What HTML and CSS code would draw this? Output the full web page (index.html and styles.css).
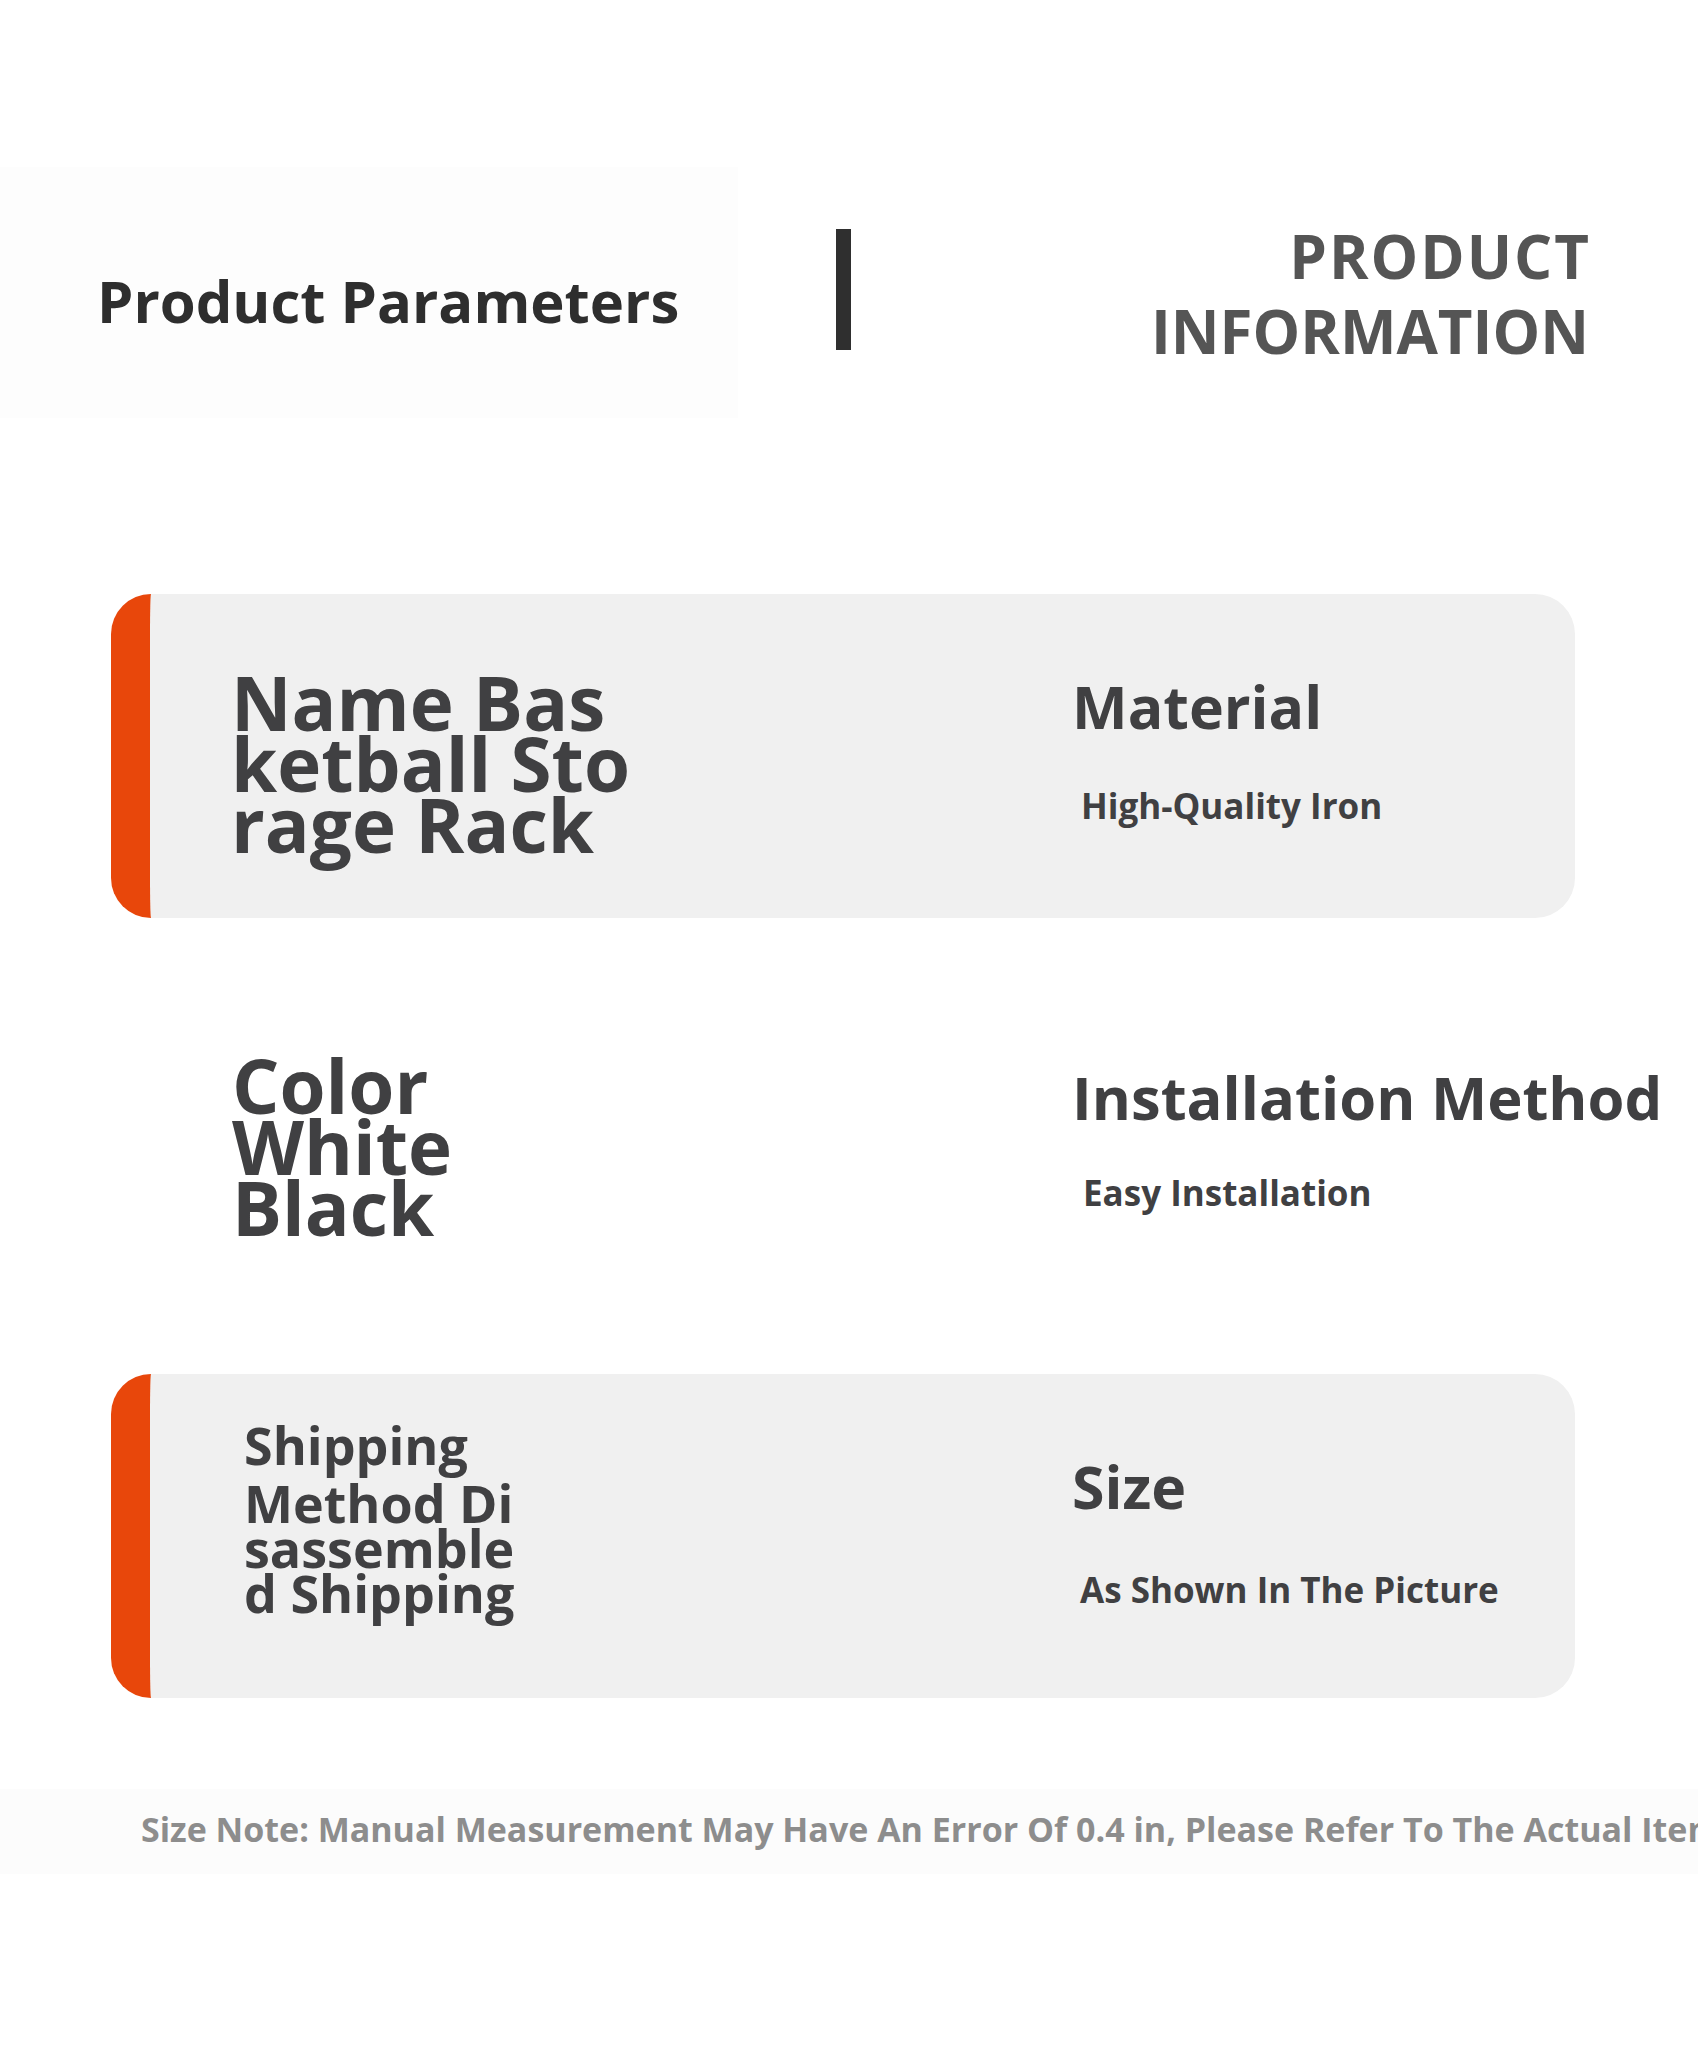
FILE: index.html
```html
<!DOCTYPE html>
<html lang="en">
<head>
<meta charset="utf-8">
<title>Product Parameters</title>
<link rel="stylesheet" href="styles.css">
</head>
<body>
<header class="header">
  <div class="header__left">
    <h1 class="header__title">Product Parameters</h1>
  </div>
  <div class="header__bar"></div>
  <p class="header__right"><span class="header__wide">PRODUCT</span><br>INFORMATION</p>
</header>

<main class="cards">
  <section class="card">
    <div class="card__left card__left--name">Name Bas<br>ketball Sto<br>rage Rack</div>
    <div class="card__right">
      <div class="card__label">Material</div>
      <div class="card__value">High-Quality Iron</div>
    </div>
  </section>

  <section class="card card--plain">
    <div class="card__left card__left--color">Color<br>White<br>Black</div>
    <div class="card__right">
      <div class="card__label card__label--wide">Installation Method</div>
      <div class="card__value card__value--install">Easy Installation</div>
    </div>
  </section>

  <section class="card">
    <div class="card__left card__left--ship">
      <div class="ship__first">Shipping</div>
      <div class="ship__rest">Method Di<br>sassemble<br>d Shipping</div>
    </div>
    <div class="card__right">
      <div class="card__label">Size</div>
      <div class="card__value card__value--size">As Shown In The Picture</div>
    </div>
  </section>
</main>

<footer class="note">
  <p class="note__text">Size Note: Manual Measurement May Have An Error Of 0.4 in, Please Refer To The Actual Item</p>
</footer>
</body>
</html>
```

FILE: styles.css
```css
* {
  box-sizing: border-box;
}

html, body {
  margin: 0;
  padding: 0;
  background: #ffffff;
  overflow-x: hidden;
}

body {
  width: 1698px;
  min-height: 2048px;
  overflow: hidden;
  font-family: "Open Sans", "Noto Sans", "Liberation Sans", sans-serif;
  font-weight: 700;
  color: #414042;
}

/* Header */
.header {
  display: flex;
  align-items: flex-start;
  padding-top: 167px;
}

.header__left {
  width: 738px;
  height: 251px;
  padding: 105px 0 0 97px;
  background: #fdfdfd;
}

.header__title {
  margin: 0;
  font-size: 58px;
  line-height: 58px;
  font-weight: 700;
  color: #2e2e2e;
  white-space: nowrap;
}

.header__bar {
  width: 15px;
  height: 121px;
  margin-left: 98px;
  margin-top: 62px;
  background: #2f2f2f;
}

.header__right {
  flex: 1;
  margin: 52px 0 0 0;
  padding-right: 109px;
  text-align: right;
  font-size: 60px;
  line-height: 75px;
  color: #555555;
}

.header__wide {
  letter-spacing: 2px;
  margin-right: -2px;
}

/* Cards */
.cards {
  display: flex;
  flex-direction: column;
  gap: 66px;
  margin-top: 176px;
  padding-left: 111px;
}

.card {
  width: 1464px;
  height: 324px;
  display: grid;
  grid-template-columns: 841px 1fr;
  padding-left: 81px;
  background: #f0f0f0;
  border-left: 39px solid #e8470b;
  border-radius: 40px;
}

.card--plain {
  background: transparent;
  border-left-color: transparent;
}

.card__left {
  font-size: 74.5px;
  line-height: 61px;
  white-space: nowrap;
  color: #404042;
}

.card__left--name {
  padding-top: 78px;
}

.card__left--color {
  padding-top: 71px;
  padding-left: 1px;
}

.card__left--ship {
  padding-top: 48px;
  padding-left: 13px;
  font-size: 52px;
  line-height: 45px;
}

.ship__first {
  margin-bottom: 13px;
}

.card__right {
  padding-top: 83px;
  white-space: nowrap;
}

.card__label {
  font-size: 59px;
  line-height: 59px;
  color: #404042;
}

.card__label--wide {
  font-size: 59.7px;
}

.card__value {
  margin-top: 52px;
  padding-left: 9px;
  font-size: 35px;
  line-height: 35px;
  color: #404042;
}

.card__value--install {
  margin-top: 49px;
  padding-left: 11px;
}

.card__value--size {
  margin-top: 56px;
  padding-left: 8px;
}

/* Footnote */
.note {
  margin-top: 91px;
  height: 85px;
  padding: 23px 0 0 141px;
  background: #fcfcfc;
  overflow: hidden;
}

.note__text {
  margin: 0;
  font-size: 34px;
  line-height: 34px;
  color: #8d8d8d;
  white-space: nowrap;
}
```
